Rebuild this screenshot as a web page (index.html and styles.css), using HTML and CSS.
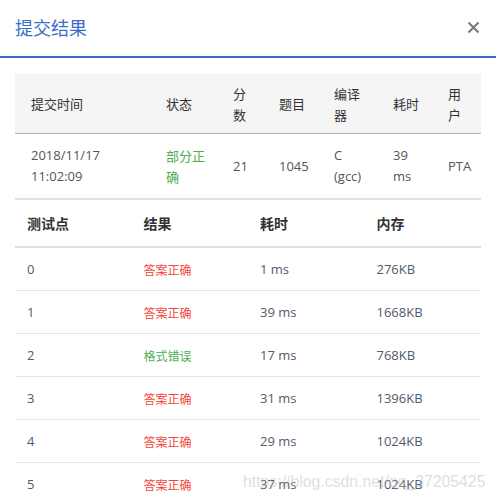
FILE: index.html
```html
<!DOCTYPE html>
<html lang="zh">
<head>
<meta charset="utf-8">
<link rel="stylesheet" href="styles.css">
</head>
<body>
<div class="modal">
  <div class="modal-header">
    <h2 class="title">提交结果</h2>
    <span class="close">
      <svg width="13" height="13" viewBox="0 0 13 13"><path d="M1.5 1.5 L11.5 11.5 M11.5 1.5 L1.5 11.5" stroke="#777" stroke-width="2" fill="none"/></svg>
    </span>
  </div>
  <div class="modal-body">
    <table class="summary">
      <colgroup>
        <col style="width:135px"><col style="width:67px"><col style="width:46px"><col style="width:55px"><col style="width:59px"><col style="width:55px"><col style="width:49px">
      </colgroup>
      <thead>
        <tr><th>提交时间</th><th>状态</th><th>分数</th><th>题目</th><th>编译器</th><th>耗时</th><th>用户</th></tr>
      </thead>
      <tbody>
        <tr><td>2018/11/17 11:02:09</td><td class="ok">部分正确</td><td>21</td><td>1045</td><td>C (gcc)</td><td>39 ms</td><td>PTA</td></tr>
      </tbody>
    </table>
    <table class="cases">
      <thead>
        <tr><th>测试点</th><th>结果</th><th>耗时</th><th>内存</th></tr>
      </thead>
      <tbody>
        <tr><td>0</td><td class="ac">答案正确</td><td>1 ms</td><td>276KB</td></tr>
        <tr><td>1</td><td class="ac">答案正确</td><td>39 ms</td><td>1668KB</td></tr>
        <tr><td>2</td><td class="pe">格式错误</td><td>17 ms</td><td>768KB</td></tr>
        <tr><td>3</td><td class="ac">答案正确</td><td>31 ms</td><td>1396KB</td></tr>
        <tr><td>4</td><td class="ac">答案正确</td><td>29 ms</td><td>1024KB</td></tr>
        <tr><td>5</td><td class="ac">答案正确</td><td>37 ms</td><td>1024KB</td></tr>
      </tbody>
    </table>
  </div>
  <div class="watermark">https://blog.csdn.net/qq_37205425</div>
</div>
</body>
</html>
```
FILE: styles.css
```css
html, body {
  margin: 0;
  padding: 0;
  background: #fff;
}
body {
  width: 496px;
  height: 504px;
  overflow: hidden;
  font-family: "Open Sans", "Noto Sans CJK SC", sans-serif;
  color: #515151;
}
.modal {
  position: relative;
  height: 504px;
}
.modal-header {
  height: 56px;
  border-bottom: 2px solid #3b6cc6;
  display: flex;
  align-items: center;
  justify-content: space-between;
  padding: 0 16px 0 15px;
}
.title {
  margin: 0;
  font-family: "Noto Sans CJK SC", sans-serif;
  font-size: 18px;
  font-weight: normal;
  color: #3b6cc9;
  line-height: 1;
  position: relative;
  top: -1px;
}
.close {
  display: flex;
  position: relative;
  top: -1px;
}
.modal-body {
  padding: 16px 15px 0;
}
table {
  width: 466px;
  border-collapse: collapse;
  table-layout: fixed;
}
.summary {
  font-size: 13px;
  line-height: 21px;
}
.summary th {
  background: #f5f5f5;
  font-weight: normal;
  color: #333;
  text-align: left;
  height: 59px;
  padding: 0 10px 0 16px;
  border-bottom: 1px solid #b3b3b3;
  font-family: "Noto Sans CJK SC", sans-serif;
}
.summary td {
  height: 64px;
  padding: 0 10px 0 16px;
  color: #555;
  border-bottom: 1px solid #e3e3e3;
}
.summary td.ok {
  color: #4cae4c;
  font-family: "Noto Sans CJK SC", sans-serif;
}
.cases {
  border-top: 1px solid #e3e3e3;
  font-size: 13px;
}
.cases th {
  text-align: left;
  font-size: 14px;
  font-weight: 600;
  color: #333;
  height: 46px;
  padding: 0 12px;
  border-bottom: 2px solid #dfe3e8;
  font-family: "Noto Sans CJK SC", sans-serif;
}
.cases td {
  height: 42px;
  padding: 0 12px;
  color: #515a6e;
  border-bottom: 1px solid #e2e5ea;
}
.cases td.ac {
  color: #f5453a;
  font-size: 12px;
  font-family: "Noto Sans CJK SC", sans-serif;
}
.cases td.pe {
  color: #4caf50;
  font-size: 12px;
  font-family: "Noto Sans CJK SC", sans-serif;
}
.watermark {
  position: absolute;
  left: 243px;
  top: 473px;
  font-family: "Liberation Sans", sans-serif;
  font-size: 15.8px;
  color: rgba(190, 190, 190, 0.5);
  white-space: nowrap;
}
```
